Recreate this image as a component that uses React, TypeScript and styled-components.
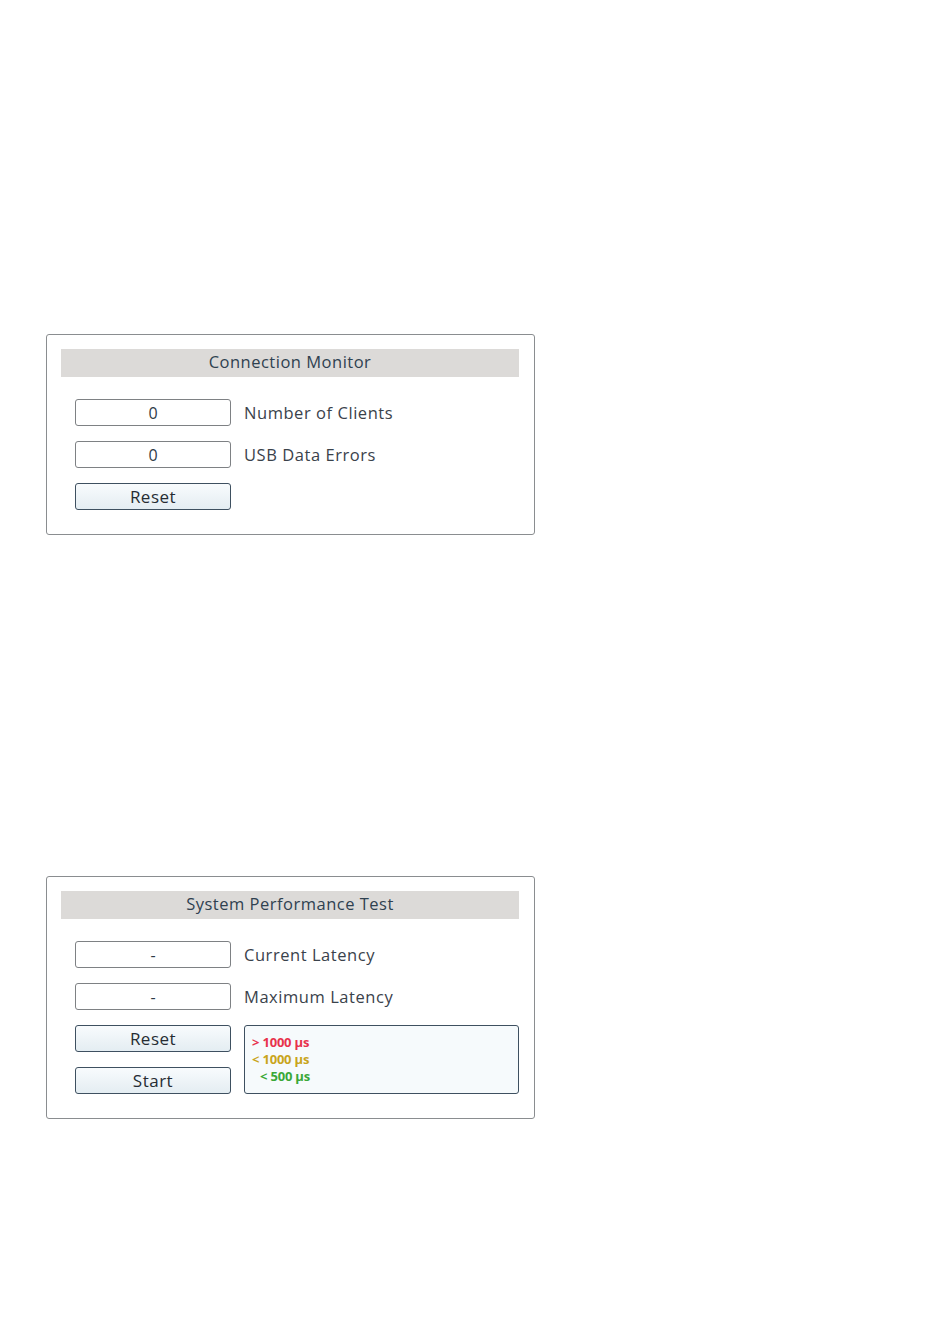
import React from "react";
import styled, { createGlobalStyle } from "styled-components";

const GlobalStyle = createGlobalStyle`
  html, body {
    margin: 0;
    padding: 0;
    background: #ffffff;
  }
  body {
    font-family: "Open Sans", "DejaVu Sans", sans-serif;
    color: #2e3b47;
  }
`;

const Page = styled.div`
  width: 950px;
  min-height: 1318px;
  padding: 334px 0 0 46px;
  box-sizing: border-box;
  display: flex;
  flex-direction: column;
  gap: 341px;
`;

const Panel = styled.section`
  width: 489px;
  box-sizing: border-box;
  border: 1px solid #8a8d90;
  border-radius: 3px;
  padding: 14px 15px 24px 14px;
`;

const Header = styled.div`
  height: 28px;
  box-sizing: border-box;
  padding-bottom: 3px;
  background: #dcdad8;
  display: flex;
  align-items: center;
  justify-content: center;
  font-size: 16.5px;
  font-weight: 500;
  letter-spacing: 0.5px;
  color: #2f4150;
  margin-bottom: 22px;
`;

const Grid = styled.div`
  display: grid;
  grid-template-columns: 156px 1fr;
  grid-auto-rows: 27px;
  column-gap: 13px;
  row-gap: 15px;
  padding-left: 14px;
`;

const Field = styled.div`
  box-sizing: border-box;
  border: 1px solid #7e8184;
  border-radius: 3px;
  background: #ffffff;
  display: flex;
  align-items: center;
  justify-content: center;
  font-size: 16px;
  font-weight: 500;
  color: #2e3b47;
`;

const Label = styled.div`
  display: flex;
  align-items: center;
  font-size: 16.5px;
  font-weight: 500;
  letter-spacing: 0.55px;
  color: #3a424b;
`;

const Button = styled.button`
  box-sizing: border-box;
  border: 1px solid #3e5060;
  border-radius: 3px;
  background: linear-gradient(#f8fbfd, #e4edf2);
  font-family: "Open Sans", "DejaVu Sans", sans-serif;
  font-size: 17px;
  font-weight: 500;
  letter-spacing: 0.5px;
  color: #262c33;
  padding: 0;
  display: flex;
  align-items: center;
  justify-content: center;
`;

const Legend = styled.div`
  grid-column: 2;
  grid-row: span 2;
  box-sizing: border-box;
  border: 1px solid #3e5060;
  border-radius: 3px;
  background: #f6fafc;
  padding: 8px 0 0 7px;
  display: flex;
  flex-direction: column;
  font-size: 13px;
  font-weight: 700;
  line-height: 17px;
  letter-spacing: -0.2px;
`;

const LegendLine = styled.span<{ $color: string; $indent?: number }>`
  color: ${(p) => p.$color};
  padding-left: ${(p) => p.$indent ?? 0}px;
`;

const App: React.FC = () => {
  return (
    <>
      <GlobalStyle />
      <Page>
        <Panel>
          <Header>Connection Monitor</Header>
          <Grid>
            <Field>0</Field>
            <Label>Number of Clients</Label>
            <Field>0</Field>
            <Label>USB Data Errors</Label>
            <Button>Reset</Button>
          </Grid>
        </Panel>

        <Panel>
          <Header>System Performance Test</Header>
          <Grid>
            <Field>-</Field>
            <Label>Current Latency</Label>
            <Field>-</Field>
            <Label>Maximum Latency</Label>
            <Button>Reset</Button>
            <Legend>
              <LegendLine $color="#e8324c">&gt; 1000 µs</LegendLine>
              <LegendLine $color="#c9a51c">&lt; 1000 µs</LegendLine>
              <LegendLine $color="#3aa838" $indent={8}>&lt; 500 µs</LegendLine>
            </Legend>
            <Button>Start</Button>
          </Grid>
        </Panel>
      </Page>
    </>
  );
};

export default App;
